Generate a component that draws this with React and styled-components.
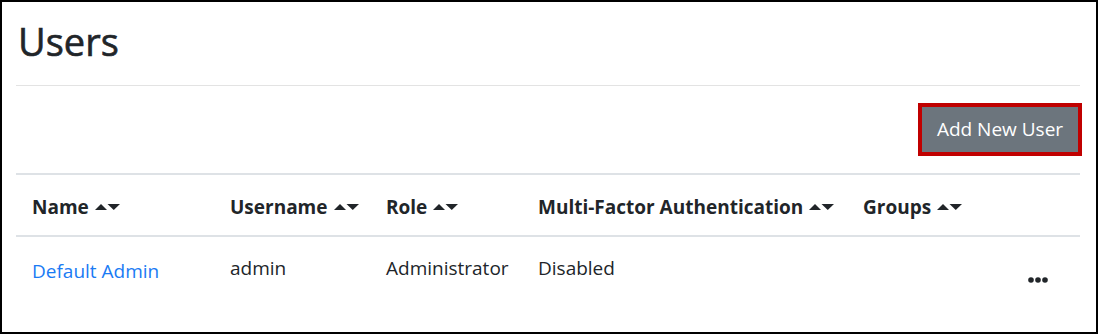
import React from 'react';
import styled, { createGlobalStyle } from 'styled-components';

const GlobalStyle = createGlobalStyle`
	html, body {
		margin: 0;
		padding: 0;
		background: #fff;
	}
	body {
		font-family: "Open Sans", "Noto Sans", sans-serif;
		color: #212529;
	}
`;

const columns = [
	{ key: 'name', label: 'Name', width: '198px' },
	{ key: 'username', label: 'Username', width: '156px' },
	{ key: 'role', label: 'Role', width: '152px' },
	{ key: 'mfa', label: 'Multi-Factor Authentication', width: '325px' },
	{ key: 'groups', label: 'Groups', width: '165px' },
	{ key: 'actions', label: '', width: 'auto' }
];

const users = [
	{ name: 'Default Admin', username: 'admin', role: 'Administrator', mfa: 'Disabled', groups: '' }
];

function SortIcon() {
	return (
		<SortSvg width="25" height="6" viewBox="0 0 25 6">
			<path d="M0 6 L6 0 L12 6 Z" fill="#212529" />
			<path d="M12.5 0 L25 0 L18.75 6 Z" fill="#212529" />
		</SortSvg>
	);
}

function MoreIcon() {
	return (
		<svg width="20" height="6" viewBox="0 0 20 6">
			<circle cx="3" cy="3" r="2.8" fill="#212529" />
			<circle cx="10" cy="3" r="2.8" fill="#212529" />
			<circle cx="17" cy="3" r="2.8" fill="#212529" />
		</svg>
	);
}

class App extends React.Component {
	render() {
		return (
			<Frame>
				<GlobalStyle />
				<Title>Users</Title>
				<Divider />
				<Toolbar>
					<AddButton>Add New User</AddButton>
				</Toolbar>
				<Table>
					<colgroup>
						{columns.map((c) => (
							<col key={c.key} style={{ width: c.width }} />
						))}
					</colgroup>
					<thead>
						<tr>
							{columns.map((c) => (
								<HeadCell key={c.key}>
									{c.label && (
										<HeadInner>
											{c.label}
											<SortIcon />
										</HeadInner>
									)}
								</HeadCell>
							))}
						</tr>
					</thead>
					<tbody>
						{users.map((u) => (
							<tr key={u.username}>
								<BodyCell>
									<UserLink href="#">{u.name}</UserLink>
								</BodyCell>
								<BodyCell>{u.username}</BodyCell>
								<BodyCell>{u.role}</BodyCell>
								<BodyCell>{u.mfa}</BodyCell>
								<BodyCell>{u.groups}</BodyCell>
								<ActionCell>
									<MoreIcon />
								</ActionCell>
							</tr>
						))}
					</tbody>
				</Table>
			</Frame>
		);
	}
}

export default App;

const Frame = styled.div`
	width: 1098px;
	height: 334px;
	box-sizing: border-box;
	border: 2px solid #000;
	padding: 0 16px 0 14px;
	overflow: hidden;
`;

const Title = styled.h1`
	font-size: 38px;
	font-weight: 500;
	line-height: 1.2;
	margin: 17px 0 0 2px;
	color: #212529;
	-webkit-text-stroke: 0.6px #212529;
`;

const Divider = styled.hr`
	border: 0;
	border-top: 1px solid #e3e3e3;
	margin: 20px 0 0 0;
`;

const Toolbar = styled.div`
	display: flex;
	justify-content: flex-end;
	padding-top: 17px;
	margin-right: -2px;
`;

const AddButton = styled.button`
	font-family: "Open Sans", "Noto Sans", sans-serif;
	font-size: 19px;
	color: #fff;
	background: #6c757d;
	border: 4px solid #c00000;
	box-sizing: border-box;
	height: 53px;
	width: 164px;
	padding: 0;
	cursor: pointer;
`;

const Table = styled.table`
	width: 100%;
	margin-top: 17px;
	border-collapse: collapse;
	table-layout: fixed;
	font-size: 19px;
`;

const HeadCell = styled.th`
	text-align: left;
	font-weight: 700;
	border-top: 2px solid #dee2e6;
	border-bottom: 2px solid #dee2e6;
	height: 62px;
	padding: 4px 16px 0;
	box-sizing: border-box;
	white-space: nowrap;
`;

const HeadInner = styled.span`
	display: inline-flex;
	align-items: center;
	gap: 6px;
`;

const SortSvg = styled.svg`
	display: block;
`;

const BodyCell = styled.td`
	padding: 18px 16px 0;
	height: 62px;
	box-sizing: border-box;
	vertical-align: top;
	white-space: nowrap;
	line-height: 26px;
`;

const ActionCell = styled(BodyCell)`
	text-align: right;
	padding-right: 33px;
	padding-top: 36px;
	line-height: 6px;
`;

const UserLink = styled.a`
	color: #1a7bf4;
	text-decoration: none;
	position: relative;
	top: 3px;
`;
